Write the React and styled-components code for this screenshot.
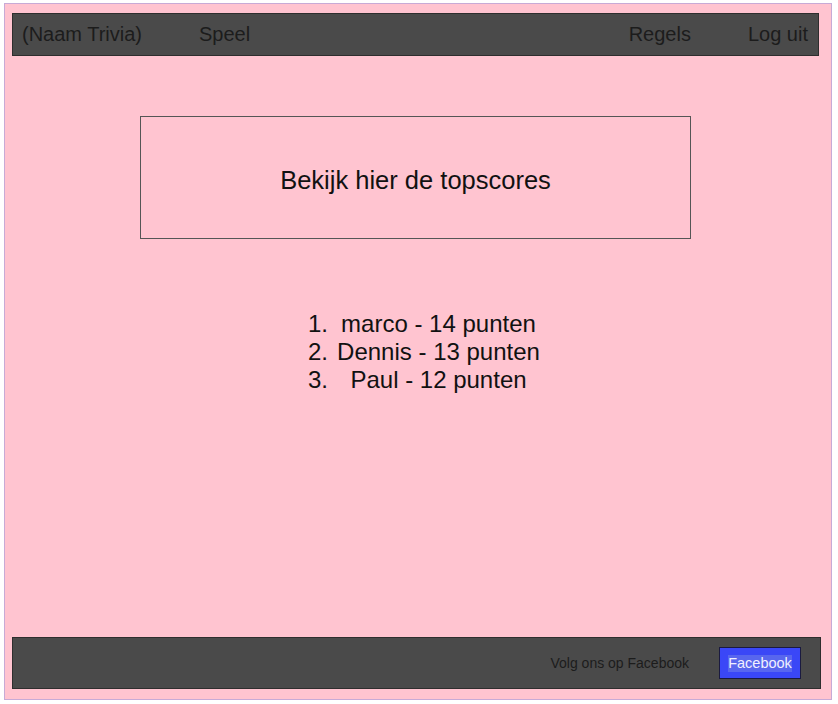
import React from "react";
import styled, { createGlobalStyle } from "styled-components";

const GlobalStyle = createGlobalStyle`
  body {
    margin: 0;
    background: #ffffff;
    font-family: "Liberation Sans", Arial, sans-serif;
  }
`;

const scores = [
  { name: "marco", points: 14 },
  { name: "Dennis", points: 13 },
  { name: "Paul", points: 12 },
];

function App() {
  return (
    <>
      <GlobalStyle />
      <Frame>
        <Header>
          <NavItem>(Naam Trivia)</NavItem>
          <NavItem>Speel</NavItem>
          <Spacer />
          <NavItem>Regels</NavItem>
          <NavItem>Log uit</NavItem>
        </Header>

        <Main>
          <TitleBox>Bekijk hier de topscores</TitleBox>
          <ScoreList>
            {scores.map((s, i) => (
              <React.Fragment key={i}>
                <Rank>{i + 1}.</Rank>
                <Entry>
                  {s.name} - {s.points} punten
                </Entry>
              </React.Fragment>
            ))}
          </ScoreList>
        </Main>

        <Footer>
          <FollowText>Volg ons op Facebook</FollowText>
          <FacebookButton>
            <Selected>Facebook</Selected>
          </FacebookButton>
        </Footer>
      </Frame>
    </>
  );
}

const Frame = styled.div`
  box-sizing: border-box;
  margin: 3px 0 0 4px;
  width: 828px;
  height: 697px;
  border: 1px solid #c7aad6;
  background-color: #ffc4d0;
  padding: 9px 12px 10px 7px;
  display: flex;
  flex-direction: column;
`;

const Header = styled.div`
  box-sizing: border-box;
  height: 43px;
  display: flex;
  align-items: center;
  gap: 57px;
  padding: 0 10px 0 9px;
  background-color: #4a4a4a;
  border: 1px solid #2e2e2e;
`;

const NavItem = styled.span`
  font-size: 20px;
  color: #1c1c1c;
`;

const Spacer = styled.div`
  flex: 1;
`;

const Main = styled.div`
  flex: 1;
  display: flex;
  flex-direction: column;
  align-items: center;
  padding-top: 60px;
`;

const TitleBox = styled.div`
  box-sizing: border-box;
  width: 551px;
  height: 123px;
  border: 1px solid #555555;
  display: flex;
  align-items: center;
  justify-content: center;
  font-size: 25.5px;
  color: #111111;
  padding-top: 5px;
`;

const ScoreList = styled.div`
  margin-top: 71px;
  margin-left: 20px;
  display: grid;
  grid-template-columns: 26px 209px;
  font-size: 24px;
  line-height: 28px;
  color: #111111;
`;

const Rank = styled.span``;

const Entry = styled.span`
  text-align: center;
`;

const Footer = styled.div`
  box-sizing: border-box;
  height: 52px;
  margin-right: -2px;
  display: flex;
  align-items: center;
  justify-content: flex-end;
  gap: 30px;
  padding: 0 19px 0 0;
  background-color: #4a4a4a;
  border: 1px solid #2e2e2e;
`;

const FollowText = styled.span`
  font-size: 14px;
  color: #1c1c1c;
`;

const FacebookButton = styled.div`
  box-sizing: border-box;
  width: 82px;
  height: 32px;
  display: flex;
  align-items: center;
  justify-content: center;
  background-color: #3a47f7;
  border: 1px solid #1a1a40;
`;

const Selected = styled.span`
  font-size: 14.5px;
  line-height: 17px;
  color: #f0f0ff;
  background-color: #5866ee;
`;

export default App;
